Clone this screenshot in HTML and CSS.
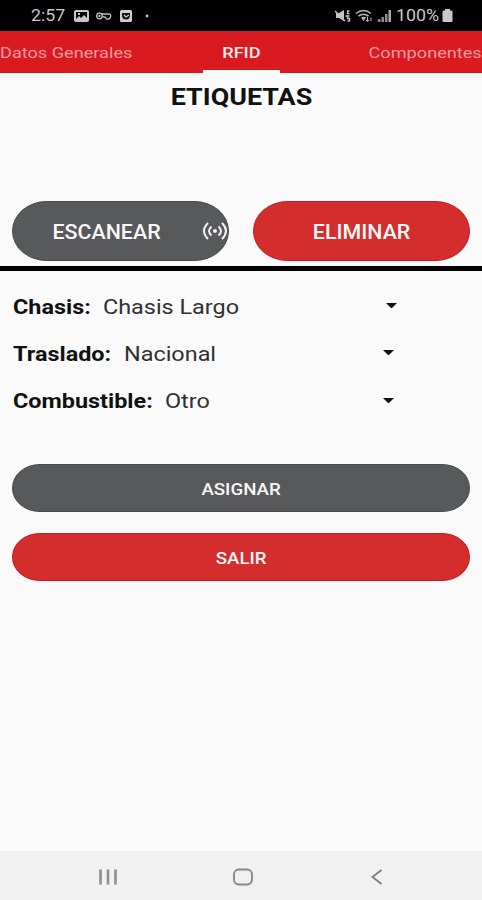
FILE: index.html
```html
<!DOCTYPE html>
<html lang="es">
<head>
    <meta charset="UTF-8">
    <meta name="viewport" content="width=device-width, initial-scale=1.0">
    <title>Etiquetas RFID</title>
    <link rel="stylesheet" href="styles.css">
</head>
<body>
    <div class="screen">
        <header class="status-bar">
            <div class="status-left">
                <span class="clock"><span class="wide">2:57</span></span>
                <svg class="notifications" width="78" height="16" viewBox="0 0 78 16">
                    <path fill="#c8c8c8" fill-rule="evenodd" d="M2 2h11q2 0 2 2v8q0 2-2 2H2q-2 0-2-2V4q0-2 2-2zM2 4v7l3-3 2 2 3-3 3 3V4zM4 5h2v2H4z"/>
                    <g fill="none" stroke="#c0c0c0" stroke-width="1.300">
                        <circle cx="25.500" cy="8" r="2.800"/>
                        <circle cx="25.500" cy="8" r=".5"/>
                        <path d="M27.500 6h7q3 0 2 3t-4 2q-1-3-4-2"/>
                    </g>
                    <rect x="46" y="2" width="12" height="12" rx="1.500" fill="#d0d0d0"/>
                    <path d="M48 5h8v2.500q0 4-4 4t-4-4z" fill="#111"/>
                    <path d="M50 7l2 2 3-2" fill="none" stroke="#d0d0d0" stroke-width="1.300"/>
                    <circle cx="73" cy="8" r="1.400" fill="#c8c8c8"/>
                </svg>
            </div>
            <div class="status-right">
                <svg class="signals" width="57" height="16" viewBox="0 0 57 16">
                    <path d="M1 5h3l5-3v11l-5-3H1z" fill="#c4c4c4"/>
                    <path d="M0 3l10 10M10.500 8h2M14.500 3h-2v2.500h2M14.500 8h-2v2.500h2v2.500h-2" fill="none" stroke="#c4c4c4" stroke-width="1.300"/>
                    <g fill="none" stroke="#b8b8b8" stroke-width="1.600">
                        <path d="M21 5.500q7.500-6 15 0M23.500 8q5-3.500 10 0"/>
                        <path d="M32.500 9v4.500M31 12l1.500 1.500 1.500-1.500M36 13V9.500" stroke-width="1"/>
                    </g>
                    <path d="M26 9.500q2.500-1.500 5 0L28.500 13z" fill="#b8b8b8"/>
                    <path d="M43 14v-3h2.500v3zM46.500 14V9H49v5zM50 14V6h2.500v8z" fill="#8c8c8c"/>
                    <path d="M53.500 14V2H56v12z" fill="#aaa"/>
                </svg>
                <span class="percent"><span class="wide">100%</span></span>
                <svg class="battery" width="11" height="13" viewBox="0 0 11 13">
                    <path d="M3 0h5v1.500h1.500q1 0 1 1V12q0 1-1 1h-8q-1 0-1-1V2.500q0-1 1-1H3z" fill="#c8c8c8"/>
                </svg>
            </div>
        </header>

        <nav class="tabs">
            <a class="tab tab-first"><span class="wide">Datos Generales</span></a>
            <a class="tab active"><span class="wide">RFID</span></a>
            <a class="tab tab-last"><span class="wide">Componentes</span></a>
        </nav>

        <main class="content">
            <h1 class="title"><span class="wide">ETIQUETAS</span></h1>

            <div class="actions">
                <button class="btn btn-gray btn-tall btn-scan">
                    <span class="wide">ESCANEAR</span>
                    <svg class="scan-icon" width="26" height="20" viewBox="0 0 26 20">
                        <g fill="none" stroke="#f4f4f4" stroke-width="2">
                            <path d="M6 2Q-2 10 6 18M20 2q8 8 0 16"/>
                            <path d="M9.500 5.500q-5 4.500 0 9M16.500 5.500q5 4.500 0 9"/>
                        </g>
                        <circle cx="13" cy="10" r="2" fill="#f4f4f4"/>
                    </svg>
                </button>
                <button class="btn btn-red btn-tall"><span class="wide">ELIMINAR</span></button>
            </div>

            <div class="divider"></div>

            <div class="fields">
                <div class="field">
                    <span class="label label-chasis"><span class="wide">Chasis:</span></span>
                    <span class="value"><span class="wide">Chasis Largo</span></span>
                    <span class="arrow arrow-chasis"></span>
                </div>
                <div class="field">
                    <span class="label label-traslado"><span class="wide">Traslado:</span></span>
                    <span class="value"><span class="wide">Nacional</span></span>
                    <span class="arrow"></span>
                </div>
                <div class="field">
                    <span class="label label-combustible"><span class="wide">Combustible:</span></span>
                    <span class="value"><span class="wide">Otro</span></span>
                    <span class="arrow"></span>
                </div>
            </div>

            <div class="footer-buttons">
                <button class="btn btn-gray"><span class="wide">ASIGNAR</span></button>
                <button class="btn btn-red"><span class="wide">SALIR</span></button>
            </div>
        </main>

        <footer class="nav-bar">
            <svg width="20" height="18" viewBox="0 0 20 18">
                <path d="M2.500 1.500v15M10 1.500v15M17.500 1.500v15" stroke="#8e8e8e" stroke-width="2.600"/>
            </svg>
            <svg width="20" height="18" viewBox="0 0 20 18">
                <rect x="1" y="1.500" width="18" height="15" rx="5" fill="none" stroke="#858585" stroke-width="1.800"/>
            </svg>
            <svg width="20" height="18" viewBox="0 0 20 18">
                <path d="M14.500 2L5.500 9l9 7" fill="none" stroke="#808080" stroke-width="1.900"/>
            </svg>
        </footer>
    </div>
</body>
</html>
```

FILE: styles.css
```css
* {
    margin: 0;
    padding: 0;
    box-sizing: border-box;
}

body {
    font-family: Roboto, "Liberation Sans", sans-serif;
    background: #fafafa;
}

.screen {
    display: flex;
    flex-direction: column;
    width: 482px;
    height: 900px;
    overflow: hidden;
}

/* extended lettering */
.wide {
    display: inline-block;
    white-space: nowrap;
    transform: scaleX(1.17);
}

.status-bar {
    display: flex;
    justify-content: space-between;
    height: 31px;
    padding: 0 29px 0 31px;
    background: #000;
    color: #c8c8c8;
    font-size: 16px;
    line-height: 32px;
}

.status-bar .wide {
    transform: scaleX(1.11);
}

.status-left,
.status-right {
    display: flex;
    align-items: center;
}

.clock {
    width: 43px;
}

.clock .wide,
.percent .wide,
.tab-first .wide,
.label .wide,
.value .wide {
    transform-origin: left;
}

.percent {
    width: 43px;
    margin-left: 4px;
}

.battery {
    margin-left: 3px;
}

.tabs {
    display: grid;
    grid-template-columns: 203px 77px 202px;
    height: 42px;
    background: #d91a21;
    font-size: 15.5px;
    line-height: 45px;
}

.tab {
    color: #f39a9d;
}

.tab.active {
    height: 42px;
    border-bottom: 3px solid #fafafa;
    color: #fdeaea;
    font-weight: 500;
    text-align: center;
}

.tab-last {
    text-align: right;
}

.tab-last .wide {
    transform-origin: right;
}

.content {
    flex: 1;
}

.title {
    height: 128px;
    color: #111;
    font-size: 23px;
    font-weight: 700;
    line-height: 50px;
    text-align: center;
}

.actions {
    display: flex;
    gap: 24px;
    padding: 0 12px;
}

.btn {
    display: flex;
    align-items: center;
    justify-content: center;
    width: 100%;
    height: 48px;
    padding-top: 2px;
    border: 1px solid;
    border-radius: 28px / 24px;
    color: #f8f8f8;
    font-family: inherit;
    font-size: 17px;
    font-weight: 500;
}

.btn .wide {
    transform: scaleX(1.1);
}

.btn-gray {
    background: #58595b;
    border-color: #4a4b4d;
}

.btn-red {
    background: #d32d2d;
    border-color: #c61c22;
}

.btn-tall {
    flex: 1;
    height: 60px;
    border-radius: 35px / 30px;
    font-size: 20px;
}

.btn-tall .wide {
    transform: scaleX(1.07);
}

.btn-scan {
    justify-content: flex-end;
    gap: 45px;
}

.scan-icon {
    margin-top: -2px;
}

.divider {
    height: 5px;
    margin-top: 5px;
    background: #000;
}

.fields {
    padding: 12px 12px 0 13px;
}

.field {
    display: flex;
    align-items: center;
    height: 47.3px;
    font-size: 20px;
}

.label {
    color: #111;
    font-weight: 700;
}

.label-chasis {
    width: 90px;
}

.label-traslado {
    width: 111px;
}

.label-combustible {
    width: 152px;
}

.value {
    flex: 1;
    color: #303030;
}

.arrow {
    width: 11px;
    margin: 0 76px 2px 0;
    border: 5.5px solid transparent;
    border-top: 5px solid #111;
    border-bottom: none;
}

.arrow-chasis {
    margin-right: 73px;
}

.footer-buttons {
    display: flex;
    flex-direction: column;
    gap: 21px;
    padding: 39px 12px 0;
}

.nav-bar {
    display: flex;
    justify-content: space-between;
    align-items: center;
    height: 49px;
    padding: 2px 95px 0 98px;
    background: #f1f1f1;
}
```
